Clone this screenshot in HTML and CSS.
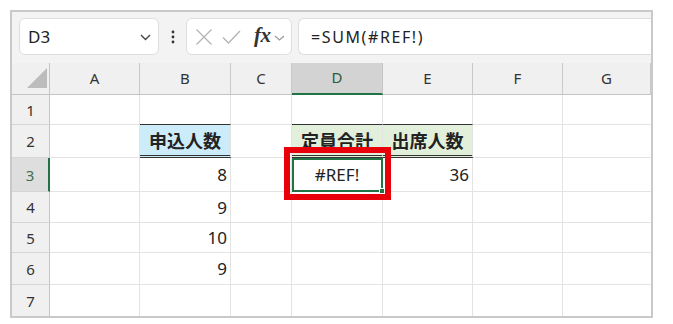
FILE: index.html
```html
<!DOCTYPE html>
<html lang="ja">
<head>
<meta charset="utf-8">
<link rel="stylesheet" href="styles.css">
</head>
<body>
<div class="frame">
  <div class="toolbar">
    <div class="namebox">
      <span class="nb-text">D3</span>
      <svg class="chev" width="11" height="7" viewBox="0 0 11 7"><path d="M1 1 L5.5 5.5 L10 1" fill="none" stroke="#444" stroke-width="1.4"/></svg>
    </div>
    <div class="dots">
      <svg width="4" height="14" viewBox="0 0 4 14"><circle cx="2" cy="2" r="1.4" fill="#333"/><circle cx="2" cy="7" r="1.4" fill="#333"/><circle cx="2" cy="12" r="1.4" fill="#333"/></svg>
    </div>
    <div class="fxbox">
      <svg class="ic-x" width="18" height="18" viewBox="0 0 18 18"><path d="M1.5 1.5 L16.5 16.5 M16.5 1.5 L1.5 16.5" stroke="#b4b4b4" stroke-width="1.3" fill="none"/></svg>
      <svg class="ic-ok" width="19" height="14" viewBox="0 0 19 14"><path d="M1 7.5 L6.5 13 L18 1" stroke="#b4b4b4" stroke-width="1.3" fill="none"/></svg>
      <span class="fx">fx</span>
      <svg class="chev2" width="11" height="6" viewBox="0 0 11 6"><path d="M1 1 L5.5 5 L10 1" fill="none" stroke="#9a9a9a" stroke-width="1.2"/></svg>
    </div>
    <div class="formula">=SUM(#REF!)</div>
  </div>
  <div class="sheet">
    <div class="corner"><div class="tri"></div></div>
    <div class="ch">A</div>
    <div class="ch">B</div>
    <div class="ch">C</div>
    <div class="ch ch-sel">D</div>
    <div class="ch">E</div>
    <div class="ch">F</div>
    <div class="ch">G</div>

    <div class="rh">1</div>
    <div class="c"></div><div class="c"></div><div class="c"></div><div class="c"></div><div class="c"></div><div class="c"></div><div class="c"></div>

    <div class="rh">2</div>
    <div class="c"></div>
    <div class="c hd blue">申込人数</div>
    <div class="c"></div>
    <div class="c hd green">定員合計</div>
    <div class="c hd green">出席人数</div>
    <div class="c"></div><div class="c"></div>

    <div class="rh rh-sel">3</div>
    <div class="c"></div>
    <div class="c num">8</div>
    <div class="c"></div>
    <div class="c sel">#REF!<span class="handle"></span></div>
    <div class="c num">36</div>
    <div class="c"></div><div class="c"></div>

    <div class="rh">4</div>
    <div class="c"></div>
    <div class="c num">9</div>
    <div class="c"></div><div class="c"></div><div class="c"></div><div class="c"></div><div class="c"></div>

    <div class="rh">5</div>
    <div class="c"></div>
    <div class="c num">10</div>
    <div class="c"></div><div class="c"></div><div class="c"></div><div class="c"></div><div class="c"></div>

    <div class="rh">6</div>
    <div class="c"></div>
    <div class="c num">9</div>
    <div class="c"></div><div class="c"></div><div class="c"></div><div class="c"></div><div class="c"></div>

    <div class="rh last">7</div>
    <div class="c last"></div><div class="c last"></div><div class="c last"></div><div class="c last"></div><div class="c last"></div><div class="c last"></div><div class="c last"></div>

    <div class="redbox"></div>
  </div>
</div>
</body>
</html>
```
FILE: styles.css
```css
* { box-sizing: border-box; }
html, body { margin: 0; padding: 0; background: #fff; }
body { font-family: "Noto Sans", "Noto Sans CJK JP", sans-serif; color: #222; }

.frame {
  margin: 10px 0 0 10px;
  width: 643px;
  border: 2px solid #c9c9c9;
  background: #f3f3f3;
}

.toolbar {
  height: 51px;
  display: flex;
  align-items: flex-start;
  padding: 6px 0 0 7px;
  background: #f3f3f3;
}
.namebox {
  width: 140px;
  height: 37px;
  background: #fff;
  border: 1px solid #dedede;
  border-radius: 6px;
  display: flex;
  align-items: center;
  justify-content: space-between;
  padding: 0 7px 0 8px;
}
.nb-text { font-size: 17px; color: #222; }
.chev { margin-top: 2px; }
.dots {
  width: 27px;
  height: 37px;
  display: flex;
  align-items: center;
  justify-content: center;
}
.fxbox {
  width: 106px;
  height: 37px;
  background: #fff;
  border: 1px solid #dedede;
  border-radius: 6px;
  display: flex;
  align-items: center;
  padding-left: 8px;
}
.ic-x { margin-right: 9px; }
.ic-ok { margin-right: 13px; margin-top: 1px; }
.fx {
  font-family: "Liberation Serif", "DejaVu Serif", serif;
  font-style: italic;
  font-weight: bold;
  font-size: 21px;
  color: #333;
  margin-right: 3px;
  margin-top: -3px;
  letter-spacing: -0.5px;
}
.chev2 { margin-top: 2px; }
.formula {
  flex: 1;
  margin-left: 6px;
  height: 37px;
  background: #fff;
  border: 1px solid #dedede;
  border-right: none;
  border-radius: 6px 0 0 6px;
  display: flex;
  align-items: center;
  padding-left: 12px;
  font-size: 16px;
  letter-spacing: 1.6px;
  color: #222;
}

.sheet {
  position: relative;
  display: grid;
  grid-template-columns: 38px 90px 91px 61px 91px 90px 90px 88px;
  grid-template-rows: 32px 30px 33px 34px 31px 30px 32px 31px;
  background: #fff;
}
.corner {
  background: #f0f0f0;
  border-right: 1px solid #c4c4c4;
  border-bottom: 1px solid #c4c4c4;
  position: relative;
}
.tri {
  position: absolute;
  right: 2px;
  bottom: 6px;
  width: 0;
  height: 0;
  border-left: 20px solid transparent;
  border-bottom: 20px solid #bcbcbc;
}
.ch {
  background: #f0f0f0;
  border-right: 1px solid #c9c9c9;
  border-bottom: 1px solid #c4c4c4;
  display: flex;
  align-items: center;
  justify-content: center;
  font-size: 15px;
  color: #333;
  padding-bottom: 2px;
}
.ch:last-of-type { border-right: none; }
.ch-sel {
  background: #d3d3d3;
  border-bottom: 2px solid #217346;
  color: #2b5c3f;
  border-right-color: #c4c4c4;
}
.rh {
  background: #f0f0f0;
  border-right: 1px solid #c4c4c4;
  border-bottom: 1px solid #d6d6d6;
  display: flex;
  align-items: center;
  justify-content: center;
  font-size: 15px;
  color: #333;
}
.rh-sel {
  background: #dedede;
  border-right: 2px solid #217346;
  color: #3d6e52;
}
.rh.last, .c.last { border-bottom: none; }
.c {
  border-right: 1px solid #e3e3e3;
  border-bottom: 1px solid #e3e3e3;
  display: flex;
  align-items: center;
  font-size: 17px;
  color: #222;
  position: relative;
}
.c:nth-child(8n) { border-right: none; }
.hd {
  justify-content: center;
  font-family: "Noto Sans CJK JP", sans-serif;
  font-weight: bold;
  font-size: 18px;
  border-top: 1px solid #333;
  border-bottom: 3px double #333;
  margin-top: -1px;
}
.blue { background: #cdecfa; }
.green { background: #e2efda; }
.num { justify-content: flex-end; padding-right: 3px; }
.sel {
  justify-content: center;
  outline: 2px solid #217346;
  outline-offset: -2px;
  z-index: 1;
}
.handle {
  position: absolute;
  right: -3px;
  bottom: -3px;
  width: 6px;
  height: 6px;
  background: #217346;
  border: 1px solid #fff;
}
.redbox {
  position: absolute;
  left: 272px;
  top: 84px;
  width: 107px;
  height: 53px;
  border: 6px solid #e8000b;
  z-index: 2;
}
```
